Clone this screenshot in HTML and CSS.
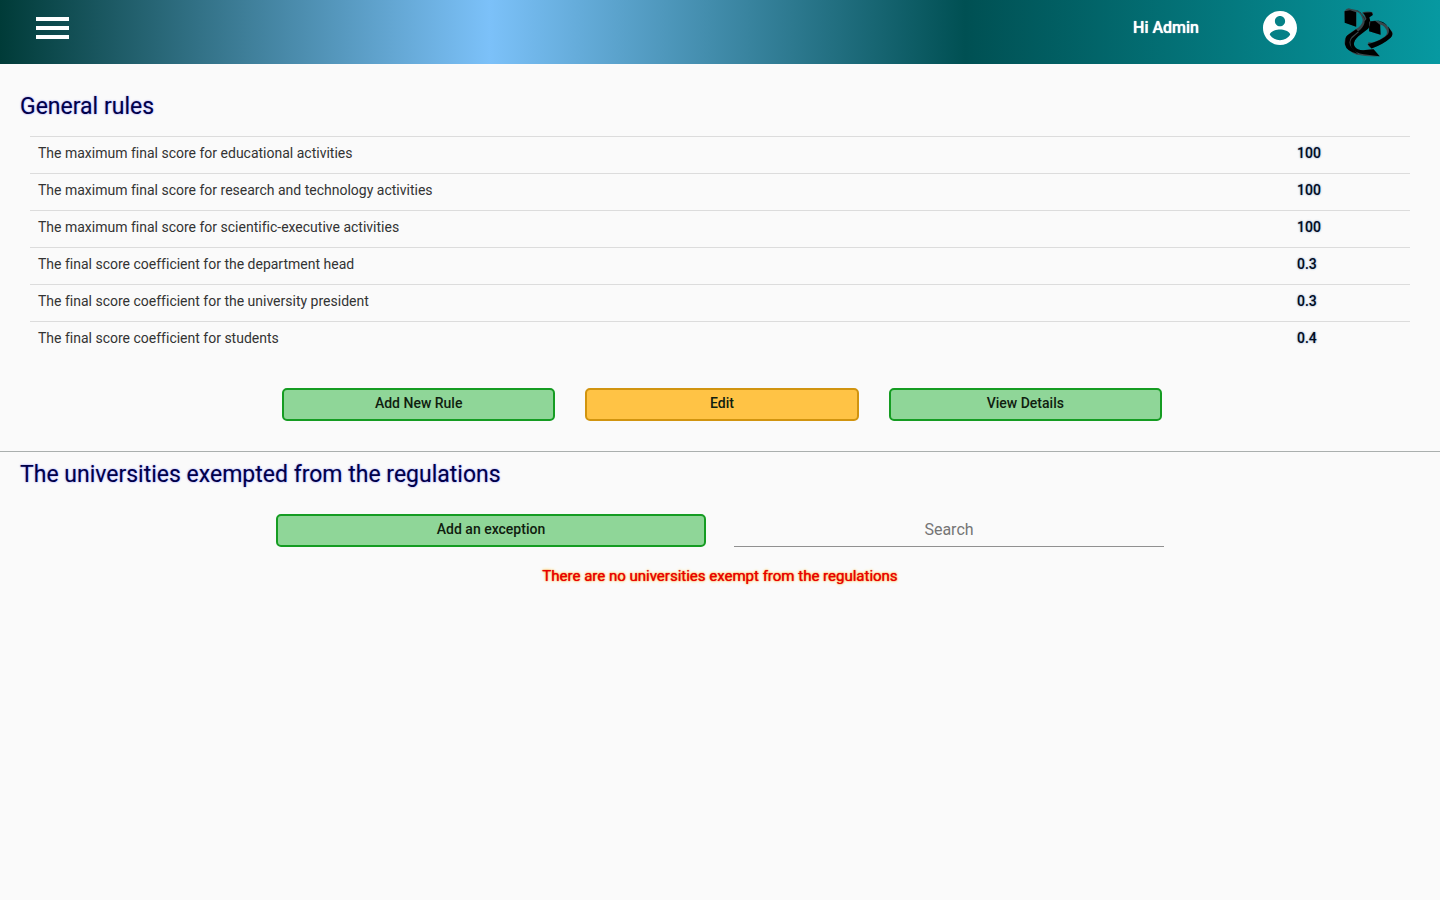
FILE: index.html
```html
<!DOCTYPE html>
<html lang="en">
<head>
  <meta charset="UTF-8">
  <meta name="viewport" content="width=device-width, initial-scale=1">
  <title>General rules</title>
  <link rel="stylesheet" href="styles.css">
</head>
<body>
  <header class="topbar">
    <button type="button" class="icon-btn" aria-label="Menu">
      <svg class="menu-icon" viewBox="0 0 33 23"><path d="M0 0h33v4H0zM0 9h33v4H0zM0 18h33v4H0z"/></svg>
    </button>
    <span class="greeting">Hi Admin</span>
    <button type="button" class="icon-btn account" aria-label="Account">
      <svg class="account-icon" viewBox="2 2 20 20"><path d="M12 2C6.48 2 2 6.48 2 12s4.48 10 10 10 10-4.480 10-10S17.520 2 12 2zm0 3c1.660 0 3 1.340 3 3s-1.340 3-3 3-3-1.340-3-3 1.340-3 3-3zm0 14.200c-2.500 0-4.710-1.280-6-3.220.030-1.990 4-3.080 6-3.080 1.990 0 5.970 1.090 6 3.080-1.290 1.940-3.500 3.220-6 3.220z"/></svg>
    </button>
    <a href="#" class="logo" aria-label="Home">
      <svg class="logo-icon" viewBox="44 24 146 146">
        <path class="logo-edge" d="M45 34Q53 22 63 26L84 31Q94 35 101 47L106 50L104 44Q97 42 99 37Q110 33 124 35Q133 37 130 43L119 48L122 64L137 61Q166 66 176 81L187 94Q193 103 182 113Q163 130 126 145Q118 141 114 133L117 126L129 127Q157 118 169 105Q177 94 164 80Q155 71 150 75L153 104L119 93L118 81Q101 91 83 110Q65 130 80 145Q88 152 106 149L132 147L151 168Q115 170 82 163Q52 152 46 132Q43 115 59 101L88 81Q102 69 99 57Q94 38 81 35V80L47 67Z"/>
        <path d="M46 34L62 31L80 37V80L46 68ZM80 31Q96 34 104 52Q110 70 94 87L67 110Q54 125 66 142Q78 160 103 162L150 168L132 147L101 150Q83 150 75 137Q69 125 87 108L116 86Q127 70 119 52L130 45L126 37L101 38L107 47L111 57L106 63Q101 36 80 31ZM119 64L137 63L152 75L153 104L119 93ZM48 120Q48 107 61 101L80 87L88 96L67 115Q59 127 68 145L86 161Q50 153 47 132ZM138 60Q165 64 175 80Q181 92 175 102Q160 119 115 132L126 145Q161 133 183 113Q193 102 183 90Q170 68 138 60Z"/>
      </svg>
    </a>
  </header>

  <main>
    <section class="rules">
      <h2>General rules</h2>
      <table class="rules-table">
        <tbody>
          <tr><th scope="row">The maximum final score for educational activities</th><td>100</td></tr>
          <tr><th scope="row">The maximum final score for research and technology activities</th><td>100</td></tr>
          <tr><th scope="row">The maximum final score for scientific-executive activities</th><td>100</td></tr>
          <tr><th scope="row">The final score coefficient for the department head</th><td>0.3</td></tr>
          <tr><th scope="row">The final score coefficient for the university president</th><td>0.3</td></tr>
          <tr><th scope="row">The final score coefficient for students</th><td>0.4</td></tr>
        </tbody>
      </table>
      <div class="actions">
        <button type="button" class="btn btn-green">Add New Rule</button>
        <button type="button" class="btn btn-orange">Edit</button>
        <button type="button" class="btn btn-green">View Details</button>
      </div>
    </section>

    <section class="exceptions">
      <h2>The universities exempted from the regulations</h2>
      <div class="exception-tools">
        <button type="button" class="btn btn-green">Add an exception</button>
        <input type="text" class="search" placeholder="Search" aria-label="Search">
      </div>
      <p class="empty">There are no universities exempt from the regulations</p>
    </section>
  </main>
</body>
</html>
```
FILE: styles.css
```css
* {
  box-sizing: border-box;
}
body {
  margin: 0;
  font-family: Roboto, sans-serif;
  font-variant-ligatures: none;
  background-color: #fafafa;
  color: #212121;
}
.topbar {
  display: flex;
  align-items: center;
  height: 64px;
  padding: 0 47px 0 36px;
  background: linear-gradient(90deg, #003b38 0%, #7cc1f9 34%, #005053 67%, #0799a1 100%);
}
.icon-btn {
  padding: 0;
  margin-bottom: 8px;
  border: none;
  background: none;
  cursor: pointer;
}
.icon-btn svg {
  display: block;
  fill: white;
}
.menu-icon {
  width: 33px;
  height: 23px;
}
.greeting {
  margin: 0 64px 8px auto;
  color: white;
  font-size: 16px;
  line-height: 24px;
  font-weight: 500;
  text-shadow: 0 0 1px white;
}
.account {
  margin-right: 47px;
}
.account-icon {
  width: 34px;
  height: 34px;
}
.logo-icon {
  display: block;
  width: 49px;
  height: 49px;
}
.logo-edge {
  fill: #39464a;
}
h2 {
  margin: 0;
  font-size: 23px;
  line-height: 28px;
  font-weight: 400;
  color: #000048;
  text-shadow: 0 0 2px #8080ff;
}
.rules {
  padding: 29px 20px 30px;
  border-bottom: 1px solid #aaafae;
}
.rules-table {
  width: calc(100% - 20px);
  margin: 15px 10px 30px;
  border-collapse: collapse;
  font-size: 14px;
  line-height: 20px;
}
.rules-table th,
.rules-table td {
  padding: 6px 8px 10px;
  border-top: 1px solid #dcdcdc;
  text-align: left;
}
.rules-table th {
  font-weight: 400;
  color: #333;
}
.rules-table td {
  width: 121px;
  font-weight: 500;
  color: #000b20;
  text-shadow: 0 0 2px #6f8cb8;
}
.actions {
  display: flex;
  gap: 30px;
  max-width: 884px;
  margin: 0 auto;
  padding-left: 4px;
}
.btn {
  flex: 1;
  height: 33px;
  padding: 0 8px 3px;
  border: 2px solid;
  border-radius: 5px;
  font-family: inherit;
  font-size: 14px;
  font-weight: 500;
  color: #10200f;
  cursor: pointer;
}
.btn-green {
  background-color: #8fd698;
  border-color: #159c22;
}
.btn-orange {
  background-color: #ffc345;
  border-color: #d1940f;
}
.exceptions {
  padding: 9px 20px;
}
.exception-tools {
  display: grid;
  grid-template-columns: 1fr 1fr;
  gap: 28px;
  max-width: 888px;
  margin: 25px auto 18px;
}
.search {
  height: 33px;
  padding: 0 0 1px;
  border: none;
  border-bottom: 1px solid #909090;
  border-radius: 0;
  background: none;
  outline: none;
  font-family: inherit;
  font-size: 16px;
  text-align: center;
}
.search::placeholder {
  color: #757575;
}
.empty {
  margin: 0;
  font-size: 15px;
  line-height: 22px;
  font-weight: 400;
  text-align: center;
  color: #e80000;
  text-shadow: 0 0 1px #e80000, 0 0 3px #ffc800;
}
```
